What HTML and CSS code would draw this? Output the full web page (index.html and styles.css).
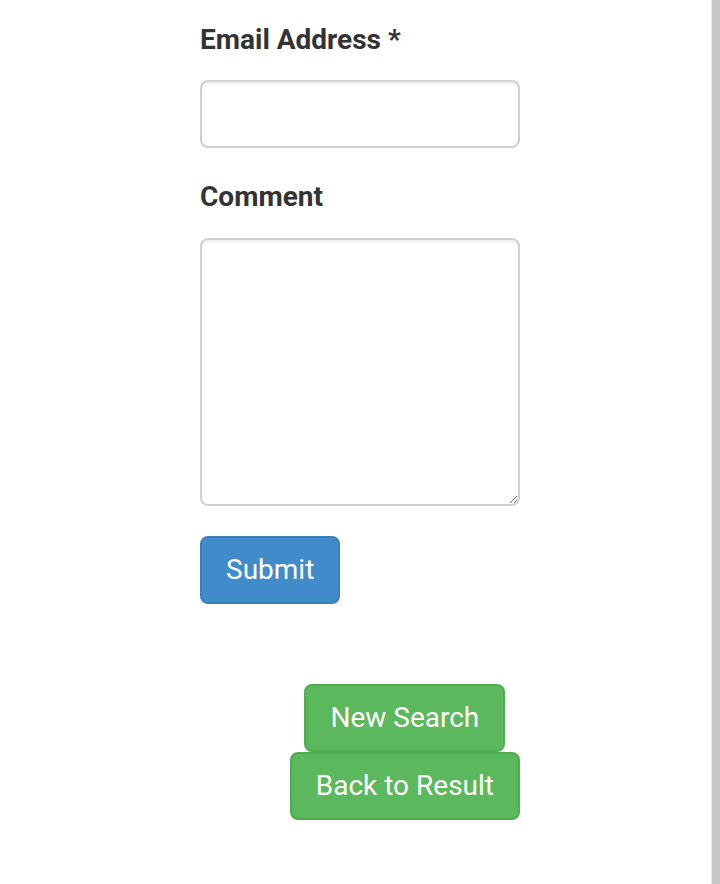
FILE: index.html
```html
<!DOCTYPE html>
<html lang="en">
<head>
    <meta charset="UTF-8">
    <title>Feedback</title>
    <link rel="stylesheet" href="styles.css">
</head>
<body>
    <div class="page">
        <form class="feedback-form">
            <div class="form-group">
                <label for="email">Email Address *</label>
                <input type="email" id="email" name="email" class="form-control">
            </div>
            <div class="form-group">
                <label for="comment">Comment</label>
                <textarea id="comment" name="comment" class="form-control comment-box"></textarea>
            </div>
            <button type="submit" class="btn btn-primary">Submit</button>
        </form>

        <div class="nav-buttons">
            <button class="btn btn-success">New Search</button>
            <button class="btn btn-success">Back to Result</button>
        </div>
    </div>

    <div class="scroll-bar"></div>
</body>
</html>
```

FILE: styles.css
```css
/* Global Styles */
body {
    margin: 0;
    padding: 0;
    background-color: #fff;
    font-family: Roboto, 'Liberation Sans', Arial, sans-serif;
    color: #333;
}

.page {
    width: 320px;
    margin: 0 auto;
    padding-top: 21px;
    display: flex;
    flex-direction: column;
}

/* Form */
.feedback-form {
    display: flex;
    flex-direction: column;
    align-items: flex-start;
}

.form-group {
    width: 100%;
    margin-bottom: 30px;
}

.form-group label {
    display: block;
    font-size: 28px;
    font-weight: bold;
    line-height: 38px;
    margin-bottom: 21px;
}

.form-group:nth-child(2) label {
    margin-bottom: 22px;
}

.form-control {
    display: block;
    box-sizing: border-box;
    width: 100%;
    height: 68px;
    margin: 0;
    padding: 12px 24px;
    font-family: inherit;
    font-size: 28px;
    color: #555;
    background-color: #fff;
    border: 2px solid #d0d0d0;
    border-radius: 8px;
    box-shadow: inset 0 2px 3px rgba(0, 0, 0, 0.075);
}

.comment-box {
    height: 268px;
}

/* Buttons */
.btn {
    display: inline-block;
    box-sizing: border-box;
    height: 68px;
    margin: 0;
    padding: 0 24px;
    font-family: inherit;
    font-size: 28px;
    line-height: 64px;
    color: #fff;
    border: 2px solid transparent;
    border-radius: 8px;
    cursor: pointer;
}

.btn-primary {
    background-color: #428bca;
    border-color: #3a7fbd;
}

.btn-success {
    background-color: #5cb85c;
    border-color: #4cae4c;
}

.nav-buttons {
    align-self: flex-end;
    margin-top: 80px;
    display: flex;
    flex-direction: column;
    align-items: center;
}

/* Right edge bar */
.scroll-bar {
    position: fixed;
    top: 0;
    right: 0;
    width: 8px;
    height: 100%;
    background-color: #c8c8c8;
    border-left: 1px solid #e4e4e4;
}
```
